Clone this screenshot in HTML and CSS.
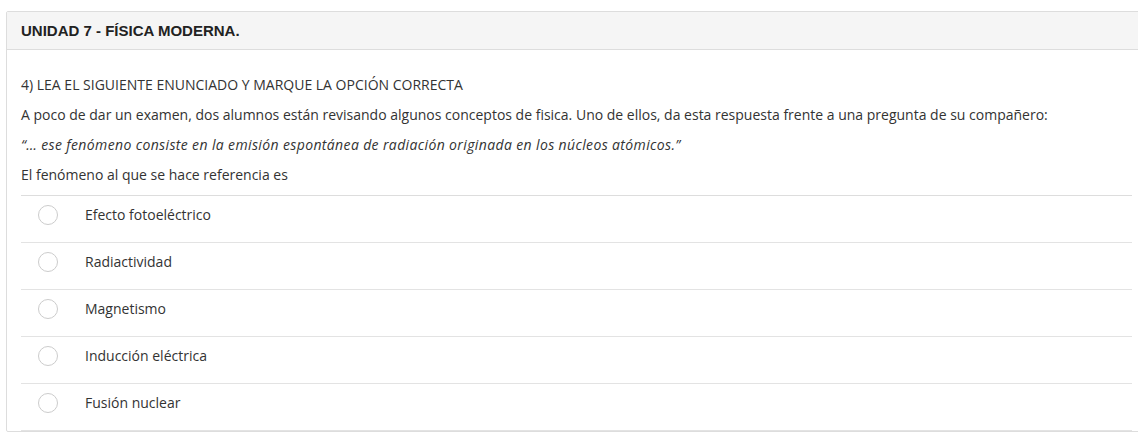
FILE: index.html
```html
<!DOCTYPE html>
<html lang="es">
<head>
<meta charset="utf-8">
<title>Unidad 7 - Física moderna</title>
<link rel="stylesheet" href="styles.css">
</head>
<body>
<div class="panel">
  <div class="panel-heading">UNIDAD 7 - FÍSICA MODERNA.</div>
  <div class="panel-body">
    <p>4) LEA EL SIGUIENTE ENUNCIADO Y MARQUE LA OPCIÓN CORRECTA</p>
    <p>A poco de dar un examen, dos alumnos están revisando algunos conceptos de fisica. Uno de ellos, da esta respuesta frente a una pregunta de su compañero:</p>
    <p class="quote">“… ese fenómeno consiste en la emisión espontánea de radiación originada en los núcleos atómicos.”</p>
    <p>El fenómeno al que se hace referencia es</p>
    <ul class="options">
      <li class="option"><span class="radio"></span><span class="label">Efecto fotoeléctrico</span></li>
      <li class="option"><span class="radio"></span><span class="label">Radiactividad</span></li>
      <li class="option"><span class="radio"></span><span class="label">Magnetismo</span></li>
      <li class="option"><span class="radio"></span><span class="label">Inducción eléctrica</span></li>
      <li class="option"><span class="radio"></span><span class="label">Fusión nuclear</span></li>
    </ul>
  </div>
</div>
</body>
</html>
```

FILE: styles.css
```css
html, body {
  margin: 0;
  padding: 0;
  background: #fff;
  overflow: hidden;
}

body {
  font-family: "Open Sans", "Liberation Sans", sans-serif;
  font-size: 14px;
  color: #333;
}

.panel {
  box-sizing: border-box;
  width: 1141px;
  margin: 11px 0 0 6px;
  border: 1px solid #ddd;
  border-radius: 2px;
  background: #fff;
}

.panel-heading {
  background: #f5f5f5;
  border-bottom: 1px solid #ddd;
  padding: 10px 14px;
  font-family: "Liberation Sans", Arial, sans-serif;
  font-weight: bold;
  font-size: 15px;
  line-height: 17px;
  color: #222;
}

.panel-body {
  padding: 25px 14px 0;
}

.panel-body p {
  margin: 0 0 10px;
  line-height: 20px;
}

.panel-body .quote {
  font-style: italic;
  letter-spacing: 0.37px;
}

.options {
  list-style: none;
  margin: 0;
  padding: 0;
  border-top: 1px solid #ddd;
}

.option {
  display: flex;
  align-items: center;
  padding: 9px 0 17px 17px;
  border-bottom: 1px solid #e3e3e3;
  line-height: 20px;
}

.radio {
  box-sizing: border-box;
  width: 20px;
  height: 20px;
  border: 1px solid #ccc;
  border-radius: 50%;
  background: #fff;
  flex: none;
}

.label {
  margin-left: 27px;
}
```
